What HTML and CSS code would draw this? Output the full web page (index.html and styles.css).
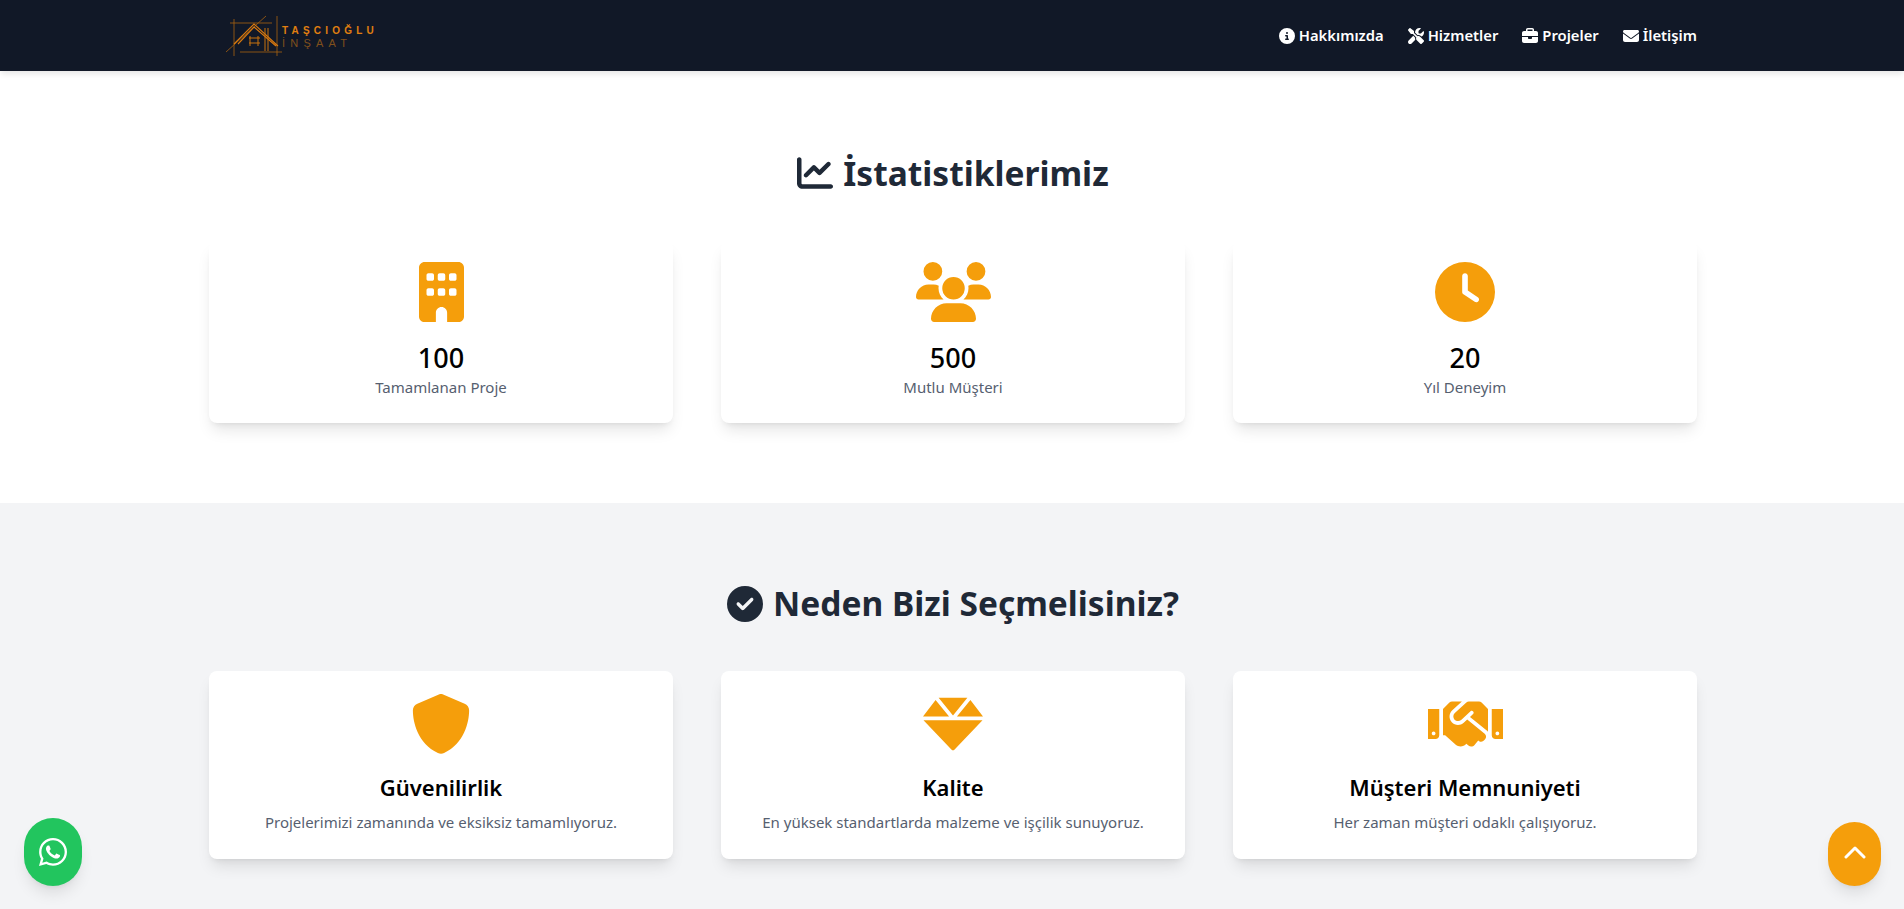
FILE: index.html
```html
<!DOCTYPE html>
<html lang="tr">
<head>
    <meta charset="UTF-8">
    <meta name="viewport" content="width=device-width, initial-scale=1.0">
    <title>Taşcıoğlu İnşaat</title>
    <link rel="stylesheet" href="styles.css">
</head>
<body>
    <!-- Üst menü -->
    <nav class="navbar">
        <div class="container nav-inner">
            <a href="#" class="logo">
                <svg class="logo-mark" viewBox="0 0 56 42" width="56" height="42" fill="none" stroke="#a8620f" stroke-width=".8">
                    <path d="M4 8H46M8 4V41M14 37H56M51 1V41M0 37L40 1"/>
                    <path d="M8 29L28 9L52 31M12 29L28 12L50 31" stroke="#d9790f" stroke-width="1.1"/>
                    <path d="M39 13V36M42 13V36" stroke="#c9730f" stroke-width="1"/>
                    <path d="M24 21V31M32 21V31M23 23H34M23 28H34" stroke="#c9730f" stroke-width="1"/>
                </svg>
                <span class="logo-text">
                    <span class="logo-top">TAŞCIOĞLU</span>
                    <span class="logo-bottom">İNŞAAT</span>
                </span>
            </a>
            <ul class="nav-links">
                <li><a href="#"><svg class="nav-icon" viewBox="0 0 512 512"><path d="M256 512A256 256 0 1 0 256 0a256 256 0 1 0 0 512zM216 336h24V272H216c-13.3 0-24-10.7-24-24s10.7-24 24-24h48c13.3 0 24 10.7 24 24v88h8c13.3 0 24 10.7 24 24s-10.7 24-24 24H216c-13.3 0-24-10.7-24-24s10.7-24 24-24zm40-208a32 32 0 1 1 0 64 32 32 0 1 1 0-64z"/></svg>Hakkımızda</a></li>
                <li><a href="#"><svg class="nav-icon" viewBox="0 0 512 512"><path d="M78.6 5C69.1-2.4 55.6-1.5 47 7L7 47c-8.5 8.5-9.4 22-2.1 31.6l80 104c4.5 5.9 11.6 9.4 19 9.4h54.1l109 109c-14.7 29-10 65.4 14.3 89.6l112 112c12.5 12.5 32.8 12.5 45.3 0l64-64c12.5-12.5 12.5-32.8 0-45.3l-112-112c-24.2-24.2-60.6-29-89.6-14.3l-109-109V104c0-7.5-3.5-14.5-9.4-19L78.6 5zM19.9 396.1C7.2 408.8 0 426.1 0 444.1C0 481.6 30.4 512 67.9 512c18 0 35.3-7.2 48-19.9L233.7 374.3c-7.8-20.9-9-43.6-3.6-65.1l-61.7-61.7L19.9 396.1zM512 144c0-10.5-1.1-20.7-3.2-30.5c-2.4-11.2-16.1-14.1-24.2-6l-63.9 63.9c-3 3-7.1 4.7-11.3 4.7H352c-8.8 0-16-7.2-16-16V102.6c0-4.2 1.7-8.3 4.7-11.3l63.9-63.9c8.1-8.1 5.2-21.8-6-24.2C388.7 1.1 378.5 0 368 0C288.5 0 224 64.5 224 144v.8l85.3 85.3c36-9.1 75.8 .5 104 28.7l15.7 15.7c49-23 83-72.8 83-130.5z"/></svg>Hizmetler</a></li>
                <li><a href="#"><svg class="nav-icon" viewBox="0 0 512 512"><path d="M184 48H328c4.4 0 8 3.6 8 8V96H176V56c0-4.4 3.6-8 8-8zm-56 8V96H64C28.7 96 0 124.7 0 160v96H192 320 512V160c0-35.3-28.7-64-64-64H384V56c0-30.9-25.1-56-56-56H184c-30.9 0-56 25.1-56 56zM512 288H320v32c0 17.7-14.3 32-32 32H224c-17.7 0-32-14.3-32-32V288H0V416c0 35.3 28.7 64 64 64H448c35.3 0 64-28.7 64-64V288z"/></svg>Projeler</a></li>
                <li><a href="#"><svg class="nav-icon" viewBox="0 0 512 512"><path d="M48 64C21.5 64 0 85.5 0 112c0 15.1 7.1 29.3 19.2 38.4L236.8 313.6c11.4 8.5 27 8.5 38.4 0L492.8 150.4c12.1-9.1 19.2-23.3 19.2-38.4c0-26.5-21.5-48-48-48H48zM0 176V384c0 35.3 28.7 64 64 64H448c35.3 0 64-28.7 64-64V176L294.4 339.2c-22.8 17.1-54 17.1-76.8 0L0 176z"/></svg>İletişim</a></li>
            </ul>
        </div>
    </nav>

    <!-- İstatistikler -->
    <section class="section section-white">
        <div class="container">
            <h2 class="section-title"><svg class="title-icon" viewBox="0 0 512 512"><path d="M64 64c0-17.7-14.3-32-32-32S0 46.3 0 64V400c0 44.2 35.8 80 80 80H480c17.7 0 32-14.3 32-32s-14.3-32-32-32H80c-8.8 0-16-7.2-16-16V64zm406.6 86.6c12.5-12.5 12.5-32.8 0-45.3s-32.8-12.5-45.3 0L320 210.7l-57.4-57.4c-12.5-12.5-32.8-12.5-45.3 0l-112 112c-12.5 12.5-12.5 32.8 0 45.3s32.8 12.5 45.3 0L240 221.3l57.4 57.4c12.5 12.5 32.8 12.5 45.3 0l128-128z"/></svg>İstatistiklerimiz</h2>
            <div class="card-grid">
                <div class="card stat-card">
                    <svg class="card-icon" viewBox="0 0 384 512"><path d="M48 0C21.5 0 0 21.5 0 48V464c0 26.5 21.5 48 48 48h96V432c0-26.5 21.5-48 48-48s48 21.5 48 48v80h96c26.5 0 48-21.5 48-48V48c0-26.5-21.5-48-48-48H48zM64 240c0-8.8 7.2-16 16-16h32c8.8 0 16 7.2 16 16v32c0 8.8-7.2 16-16 16H80c-8.8 0-16-7.2-16-16V240zm112-16h32c8.8 0 16 7.2 16 16v32c0 8.8-7.2 16-16 16H176c-8.8 0-16-7.2-16-16V240c0-8.8 7.2-16 16-16zm80 16c0-8.8 7.2-16 16-16h32c8.8 0 16 7.2 16 16v32c0 8.8-7.2 16-16 16H272c-8.8 0-16-7.2-16-16V240zM80 96h32c8.8 0 16 7.2 16 16v32c0 8.8-7.2 16-16 16H80c-8.8 0-16-7.2-16-16V112c0-8.8 7.2-16 16-16zm80 16c0-8.8 7.2-16 16-16h32c8.8 0 16 7.2 16 16v32c0 8.8-7.2 16-16 16H176c-8.8 0-16-7.2-16-16V112zM272 96h32c8.8 0 16 7.2 16 16v32c0 8.8-7.2 16-16 16H272c-8.8 0-16-7.2-16-16V112c0-8.8 7.2-16 16-16z"/></svg>
                    <h3 class="card-title">100</h3>
                    <p class="card-text">Tamamlanan Proje</p>
                </div>
                <div class="card stat-card">
                    <svg class="card-icon" viewBox="0 0 640 512"><path d="M144 0a80 80 0 1 1 0 160A80 80 0 1 1 144 0zM512 0a80 80 0 1 1 0 160A80 80 0 1 1 512 0zM0 298.7C0 239.8 47.8 192 106.7 192h42.7c15.9 0 31 3.5 44.6 9.7c-1.3 7.2-1.9 14.7-1.9 22.3c0 38.2 16.8 72.5 43.3 96c-.2 0-.4 0-.7 0H21.3C9.6 320 0 310.4 0 298.7zM405.3 320c-.2 0-.4 0-.7 0c26.6-23.5 43.3-57.8 43.3-96c0-7.6-.7-15-1.9-22.3c13.6-6.3 28.7-9.7 44.6-9.7h42.7C592.2 192 640 239.8 640 298.7c0 11.8-9.6 21.3-21.3 21.3H405.3zM224 224a96 96 0 1 1 192 0 96 96 0 1 1 -192 0zM128 485.3C128 411.7 187.7 352 261.3 352H378.7C452.3 352 512 411.7 512 485.3c0 14.7-11.9 26.7-26.7 26.7H154.7c-14.7 0-26.7-11.9-26.7-26.7z"/></svg>
                    <h3 class="card-title">500</h3>
                    <p class="card-text">Mutlu Müşteri</p>
                </div>
                <div class="card stat-card">
                    <svg class="card-icon" viewBox="0 0 512 512"><path d="M256 0a256 256 0 1 1 0 512A256 256 0 1 1 256 0zM232 120V256c0 8 4 15.5 10.7 20l96 64c11 7.4 25.9 4.4 33.3-6.7s4.4-25.9-6.7-33.3L280 243.2V120c0-13.3-10.7-24-24-24s-24 10.7-24 24z"/></svg>
                    <h3 class="card-title">20</h3>
                    <p class="card-text">Yıl Deneyim</p>
                </div>
            </div>
        </div>
    </section>

    <!-- Neden biz -->
    <section class="section section-gray">
        <div class="container">
            <h2 class="section-title"><svg class="title-icon" viewBox="0 0 512 512"><path d="M256 512A256 256 0 1 0 256 0a256 256 0 1 0 0 512zM369 209L241 337c-9.4 9.4-24.6 9.4-33.9 0l-64-64c-9.4-9.4-9.4-24.6 0-33.9s24.6-9.4 33.9 0l47 47L335 175c9.4-9.4 24.6-9.4 33.9 0s9.4 24.6 0 33.9z"/></svg>Neden Bizi Seçmelisiniz?</h2>
            <div class="card-grid">
                <div class="card">
                    <svg class="card-icon" viewBox="0 0 512 512"><path d="M256 0c4.6 0 9.2 1 13.4 2.9L457.7 82.8c22 9.3 38.4 31 38.3 57.2c-.5 99.2-41.3 280.7-213.6 363.2c-16.7 8-36.1 8-52.8 0C57.3 420.7 16.5 239.2 16 140c-.1-26.2 16.3-47.9 38.3-57.2L242.7 2.9C246.8 1 251.4 0 256 0z"/></svg>
                    <h3 class="card-title">Güvenilirlik</h3>
                    <p class="card-text">Projelerimizi zamanında ve eksiksiz tamamlıyoruz.</p>
                </div>
                <div class="card">
                    <svg class="card-icon" viewBox="0 0 512 512"><path d="M378.7 32H133.3L256 182.7L378.7 32zM512 192l-107.4-141.3L289.6 192H512zM107.4 50.67L0 192h222.4L107.4 50.67zM244.3 474.9C247.3 478.2 251.5 480 256 480s8.7-1.8 11.7-5.1L507.8 224H4.2L244.3 474.9z"/></svg>
                    <h3 class="card-title">Kalite</h3>
                    <p class="card-text">En yüksek standartlarda malzeme ve işçilik sunuyoruz.</p>
                </div>
                <div class="card">
                    <svg class="card-icon" viewBox="0 0 640 512"><path d="M434.7 64h-85.9c-8 0-15.7 3-21.6 8.4l-98.3 90c-.1.1-.2.3-.3.4-16.6 15.6-16.3 40.5-2.1 56 12.7 13.9 39.4 17.6 56.1 2.7.1-.1.3-.1.4-.2l79.9-73.2c6.5-5.9 16.7-5.5 22.6 1 6 6.5 5.5 16.6-1 22.6l-26.1 23.9L504 313.8c2.9 2.4 5.5 5 7.9 7.7V128l-54.6-54.6c-5.9-6-14.1-9.4-22.6-9.4zM544 128.2v223.9c0 17.7 14.3 32 32 32h64V128.2h-96zm48 223.9c-8.8 0-16-7.2-16-16s7.2-16 16-16 16 7.2 16 16-7.2 16-16 16zM0 384h64c17.7 0 32-14.3 32-32V128.2H0V384zm48-63.9c8.8 0 16 7.2 16 16s-7.2 16-16 16-16-7.2-16-16c0-8.9 7.2-16 16-16zm435.9 18.6L334.6 217.5l-30 27.5c-29.7 27.1-75.2 24.5-101.7-4.4-26.9-29.4-24.8-74.9 4.4-101.7L289.1 64h-83.8c-8.5 0-16.6 3.4-22.6 9.4L128 128v223.9h18.3l90.5 81.9c27.4 22.3 67.7 18.1 90-9.3l.2-.2 17.9 15.5c15.9 13 39.4 10.5 52.3-5.4l31.4-38.6 5.4 4.4c13.7 11.1 33.9 9.1 45-4.7l9.5-11.7c11.2-13.8 9.1-33.9-4.6-45.1z"/></svg>
                    <h3 class="card-title">Müşteri Memnuniyeti</h3>
                    <p class="card-text">Her zaman müşteri odaklı çalışıyoruz.</p>
                </div>
            </div>
        </div>
    </section>

    <!-- Sabit butonlar -->
    <a href="#" class="float-btn whatsapp-btn">
        <svg viewBox="0 0 448 512" width="28" height="32"><path d="M380.9 97.1C339 55.1 283.2 32 223.9 32c-122.4 0-222 99.6-222 222 0 39.1 10.2 77.3 29.6 111L0 480l117.7-30.9c32.4 17.7 68.9 27 106.1 27h.1c122.3 0 224.1-99.6 224.1-222 0-59.3-25.2-115-67.1-157zm-157 341.6c-33.2 0-65.7-8.9-94-25.7l-6.7-4-69.8 18.3L72 359.2l-4.4-7c-18.5-29.4-28.2-63.3-28.2-98.2 0-101.7 82.8-184.5 184.6-184.5 49.3 0 95.6 19.2 130.4 54.1 34.8 34.9 56.2 81.2 56.1 130.5 0 101.8-84.9 184.6-186.6 184.6zm101.2-138.2c-5.5-2.8-32.8-16.2-37.9-18-5.1-1.9-8.8-2.8-12.5 2.8-3.7 5.6-14.3 18-17.6 21.8-3.2 3.7-6.5 4.2-12 1.4-32.6-16.3-54-29.1-75.5-66-5.7-9.8 5.7-9.1 16.3-30.3 1.8-3.7.9-6.9-.5-9.7-1.4-2.8-12.5-30.1-17.1-41.2-4.5-10.8-9.1-9.3-12.5-9.5-3.2-.2-6.9-.2-10.6-.2-3.7 0-9.7 1.4-14.8 6.9-5.1 5.6-19.4 19-19.4 46.3 0 27.3 19.9 53.7 22.6 57.4 2.8 3.7 39.1 59.7 94.8 83.8 35.2 15.2 49 16.5 66.6 13.9 10.7-1.6 32.8-13.4 37.4-26.4 4.6-13 4.6-24.1 3.2-26.4-1.3-2.5-5-3.9-10.5-6.6z"/></svg>
    </a>
    <a href="#" class="float-btn top-btn">
        <svg class="top-icon" viewBox="0 0 22 13" width="22" height="13" fill="none" stroke="#fff" stroke-width="3" stroke-linecap="round" stroke-linejoin="round"><path d="M2 11L11 2L20 11"/></svg>
    </a>
</body>
</html>
```

FILE: styles.css
```css
/* Reset */
* {
    margin: 0;
    padding: 0;
    box-sizing: border-box;
}

body {
    font-family: 'Noto Sans', 'Open Sans', sans-serif;
    color: #000;
    line-height: 1.5;
    background: #f3f4f6;
    height: 100vh;
    overflow: hidden;
}

a {
    color: inherit;
    text-decoration: none;
}

.container {
    max-width: 1536px;
    margin: 0 auto;
    padding: 0 23px 0 25px;
}

/* Menü */
.navbar {
    position: relative;
    z-index: 2;
    height: 71px;
    background: #111827;
    box-shadow: 0 4px 6px -1px rgba(0, 0, 0, 0.1);
}

.nav-inner {
    display: flex;
    justify-content: space-between;
    align-items: center;
    height: 100%;
}

.logo {
    display: flex;
    align-items: center;
    gap: 0;
    margin-left: 17px;
}

.logo-mark {
    display: block;
    flex-shrink: 0;
}

.logo-text {
    display: flex;
    flex-direction: column;
    font-family: 'Liberation Sans', sans-serif;
    line-height: 13px;
    margin-top: 3px;
}

.logo-top {
    font-size: 10px;
    font-weight: 700;
    letter-spacing: 4.2px;
    color: #e07f10;
}

.logo-bottom {
    font-size: 11px;
    letter-spacing: 5.2px;
    color: #80501c;
}

.nav-links {
    display: flex;
    gap: 24px;
    list-style: none;
}

.nav-links a {
    display: flex;
    align-items: center;
    gap: 4px;
    color: #fff;
    font-size: 14.8px;
    font-weight: 600;
}

.nav-icon {
    width: 16px;
    height: 16px;
    fill: #fff;
}

/* Bölümler */
.section {
    padding: 82px 0 80px;
}

.section-white {
    background: #fff;
}

.section-gray {
    background: #f3f4f6;
    padding-top: 81px;
}

.section-title {
    display: flex;
    justify-content: center;
    align-items: center;
    gap: 10px;
    height: 40px;
    margin-bottom: 48px;
    font-size: 33.5px;
    font-weight: 700;
    color: #1f2937;
}

.section-gray .section-title {
    margin-bottom: 47px;
}

.title-icon {
    width: 36px;
    height: 36px;
    fill: #1f2937;
}

/* Kartlar */
.card-grid {
    display: grid;
    grid-template-columns: repeat(3, 1fr);
    gap: 48px;
}

.card {
    background: #fff;
    border-radius: 8px;
    padding: 23px 24px 26px;
    text-align: center;
    box-shadow: 0 10px 15px -3px rgba(0, 0, 0, 0.1), 0 4px 6px -4px rgba(0, 0, 0, 0.1);
}

.stat-card {
    padding: 21px 24px 24px;
}

.card-icon {
    display: block;
    height: 60px;
    margin: 0 auto 17px;
    fill: #f59e0b;
}

.card-title {
    font-size: 22px;
    font-weight: 600;
    line-height: 32px;
    margin-bottom: 8px;
}

.stat-card .card-icon {
    margin-bottom: 18px;
}

.stat-card .card-title {
    font-size: 27px;
    font-weight: 500;
    line-height: 36px;
    margin-bottom: 0;
}

.card-text {
    font-size: 15px;
    color: #566070;
}

/* Sabit butonlar */
.float-btn {
    position: fixed;
    bottom: 23px;
    display: flex;
    align-items: center;
    justify-content: center;
    border-radius: 30px;
    box-shadow: 0 10px 15px -3px rgba(0, 0, 0, 0.1), 0 4px 6px -4px rgba(0, 0, 0, 0.1);
    z-index: 5;
}

.whatsapp-btn {
    left: 24px;
    width: 58px;
    height: 68px;
    background: #22c55e;
    fill: #fff;
}

.top-btn {
    right: 23px;
    width: 53px;
    height: 64px;
    background: #f59e0b;
}

.top-icon {
    margin-bottom: 3px;
}
```
